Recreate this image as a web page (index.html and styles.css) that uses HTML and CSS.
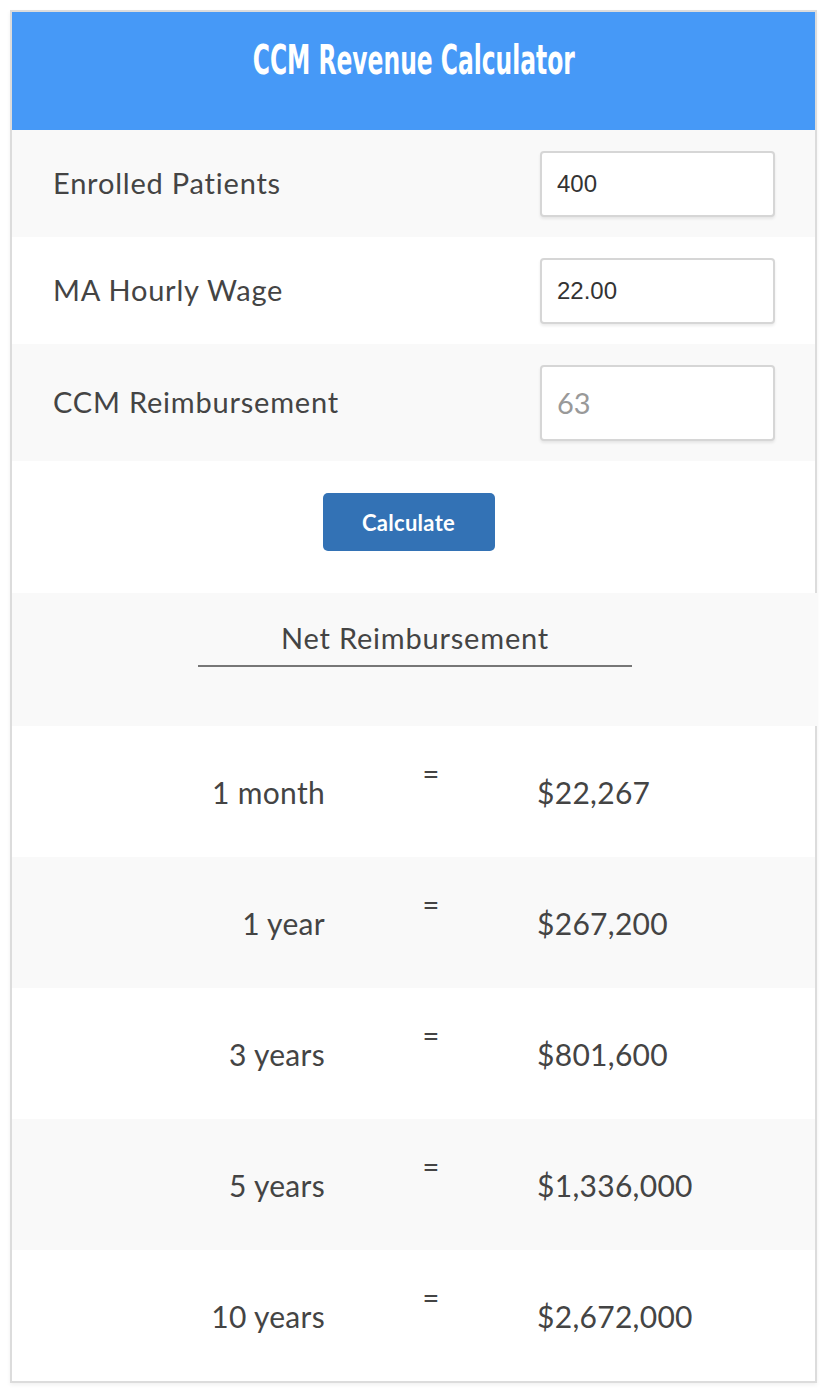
FILE: index.html
```html
<!DOCTYPE html>
<html lang="en">

<head>
    <meta charset="UTF-8">
    <meta name="viewport" content="width=device-width, initial-scale=1.0">
    <title>CCM Revenue Calculator</title>
    <link rel="stylesheet" href="styles.css">
</head>

<body>
    <div class="calculator">
        <div class="calc-header">
            <h1 class="calc-title">CCM Revenue Calculator</h1>
        </div>

        <div class="field-row shaded">
            <label for="patients">Enrolled Patients</label>
            <input type="text" id="patients" class="field-input" value="400">
        </div>
        <div class="field-row">
            <label for="wage">MA Hourly Wage</label>
            <input type="text" id="wage" class="field-input" value="22.00">
        </div>
        <div class="field-row shaded tall">
            <label for="reimb">CCM Reimbursement</label>
            <input type="text" id="reimb" class="field-input big" placeholder="63">
        </div>

        <div class="button-row">
            <button class="calc-button">Calculate</button>
        </div>

        <div class="net-heading">
            <span class="net-title">Net Reimbursement</span>
        </div>

        <div class="result-row">
            <div class="result-label">1 month</div>
            <div class="result-eq">=</div>
            <div class="result-value">$22,267</div>
        </div>
        <div class="result-row shaded">
            <div class="result-label">1 year</div>
            <div class="result-eq">=</div>
            <div class="result-value">$267,200</div>
        </div>
        <div class="result-row">
            <div class="result-label">3 years</div>
            <div class="result-eq">=</div>
            <div class="result-value">$801,600</div>
        </div>
        <div class="result-row shaded">
            <div class="result-label">5 years</div>
            <div class="result-eq">=</div>
            <div class="result-value">$1,336,000</div>
        </div>
        <div class="result-row">
            <div class="result-label">10 years</div>
            <div class="result-eq">=</div>
            <div class="result-value">$2,672,000</div>
        </div>
    </div>
</body>

</html>
```

FILE: styles.css
```css
body {
    margin: 0;
    background-color: #fff;
    font-family: Lato, "Open Sans", sans-serif;
    color: #444;
}

.calculator {
    margin: 10px 11px 10px 10px;
    border: 2px solid #dcdcdc;
    box-shadow: 0 2px 4px rgba(0, 0, 0, 0.06);
}

.calc-header {
    background-color: #4699f7;
    height: 118px;
    text-align: center;
}

.calc-title {
    margin: 0;
    padding-top: 25px;
    display: inline-block;
    font-family: "DejaVu Sans Condensed", "DejaVu Sans", sans-serif;
    font-weight: bold;
    font-size: 40px;
    line-height: 46px;
    color: #fff;
    transform: scaleX(0.65);
}

.shaded {
    background-color: #f9f9f9;
}

.field-row {
    display: flex;
    align-items: center;
    justify-content: space-between;
    height: 107px;
    padding: 0 40px 0 41px;
}

.field-row.tall {
    height: 117px;
}

.field-row label {
    font-size: 29px;
    letter-spacing: 0.8px;
    margin-bottom: 3px;
}

.field-input {
    width: 235px;
    height: 66px;
    box-sizing: border-box;
    border: 2px solid #d6d6d6;
    border-radius: 4px;
    box-shadow: 0 2px 3px rgba(0, 0, 0, 0.08);
    padding: 0 15px;
    font-family: "Liberation Sans", Arial, sans-serif;
    font-size: 24px;
    color: #333;
    background-color: #fff;
}

.field-input.big {
    height: 76px;
    font-family: Lato, sans-serif;
    font-size: 29px;
}

.field-input.big::placeholder {
    color: #999;
}

.button-row {
    height: 132px;
    display: flex;
    justify-content: center;
    align-items: flex-start;
    padding-top: 32px;
    box-sizing: border-box;
}

.calc-button {
    width: 172px;
    height: 58px;
    margin-right: 10px;
    border: none;
    border-radius: 5px;
    background-color: #3372b5;
    color: #fff;
    font-family: Lato, sans-serif;
    font-weight: bold;
    font-size: 22px;
    letter-spacing: 0.3px;
    cursor: pointer;
}

.net-heading {
    height: 133px;
    background-color: #f9f9f9;
    margin-right: -3px;
    text-align: center;
}

.net-title {
    display: inline-block;
    margin-top: 27px;
    width: 434px;
    padding-bottom: 9px;
    border-bottom: 2px solid #777;
    font-size: 29px;
    letter-spacing: 0.8px;
    line-height: 36px;
}

.result-row {
    display: grid;
    grid-template-columns: 313px 212px 1fr;
    align-items: center;
    height: 131px;
    font-size: 30px;
    letter-spacing: 0.3px;
}

.result-label {
    text-align: right;
}

.result-eq {
    text-align: center;
    padding-bottom: 38px;
    font-size: 29px;
}

.result-value {
    text-align: left;
}
```
